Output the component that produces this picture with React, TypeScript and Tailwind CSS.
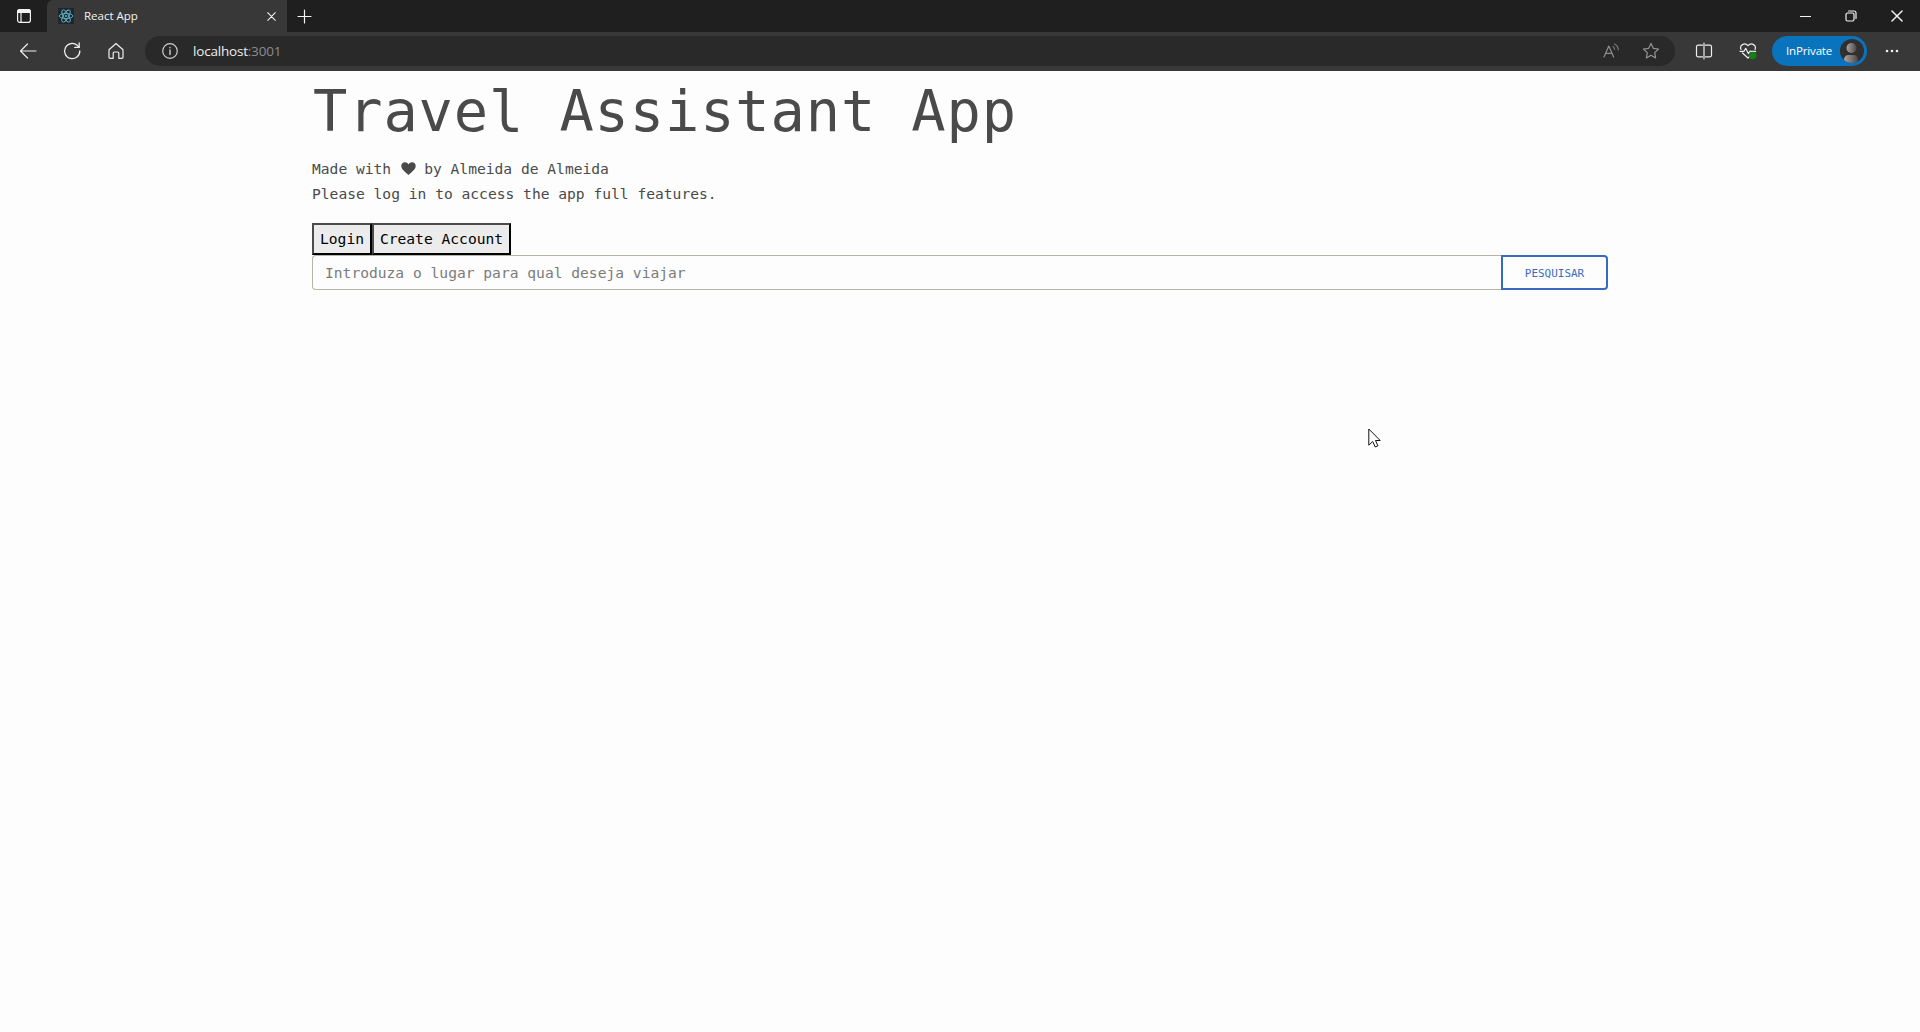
import React from "react";

const line = {
  fill: "none",
  stroke: "currentColor",
  strokeWidth: 1.2,
  strokeLinecap: "round" as const,
  strokeLinejoin: "round" as const,
};

function TabActionsIcon() {
  return (
    <svg width="16" height="16" viewBox="0 0 16 16" {...line}>
      <rect x="1.6" y="1.6" width="12.8" height="12.8" rx="2.2" />
      <path d="M1.6 4.500V3.8a2.2 2.2 0 0 1 2.2-2.2h8.4a2.2 2.2 0 0 1 2.2 2.2v.7z" fill="currentColor" />
      <path d="M5 5v9" />
    </svg>
  );
}

function ReactLogo() {
  return (
    <svg width="16" height="16" viewBox="0 0 16 16" fill="none" stroke="#58b4c8" strokeWidth="0.9">
      <rect width="16" height="16" fill="#22252c" stroke="none" />
      <ellipse cx="8" cy="8" rx="6.8" ry="2.6" />
      <ellipse cx="8" cy="8" rx="6.8" ry="2.6" transform="rotate(60 8 8)" />
      <ellipse cx="8" cy="8" rx="6.8" ry="2.6" transform="rotate(120 8 8)" />
      <circle cx="8" cy="8" r="1.1" fill="#58b4c8" stroke="none" />
    </svg>
  );
}

function Cross({ size }: { size: number }) {
  return (
    <svg width={size} height={size} viewBox="0 0 10 10" {...line}>
      <path d="M.8.8l8.4 8.4M9.2.8L.8 9.2" />
    </svg>
  );
}

function TabStrip() {
  return (
    <div className="flex h-8 bg-[#1f1f1f] text-[#f4f4f4]">
      <div className="flex w-[47px] items-center justify-center pl-px">
        <TabActionsIcon />
      </div>
      <div className="flex w-60 items-center rounded-tl-md bg-[#383838] pr-[11px] pl-[11px]">
        <ReactLogo />
        <span className="ml-[10px] text-[11.5px] leading-4">React App</span>
        <span className="ml-auto">
          <Cross size={9} />
        </span>
      </div>
      <div className="flex items-center pl-[10px]">
        <svg width="15" height="15" viewBox="0 0 15 15" {...line}>
          <path d="M7.5 1v13M1 7.5h13" />
        </svg>
      </div>
      <div className="ml-auto flex items-center pr-[17px]">
        <svg width="11" height="11" viewBox="0 0 11 11" {...line}>
          <path d="M.5 5.5h10" />
        </svg>
        <svg className="ml-[34px]" width="12" height="12" viewBox="0 0 12 12" {...line}>
          <rect x="1" y="3" width="8" height="8" rx="1.5" />
          <path d="M3.5 1H9a2 2 0 0 1 2 2v5.5" />
        </svg>
        <span className="ml-[34px]">
          <Cross size={12} />
        </span>
      </div>
    </div>
  );
}

function Toolbar() {
  return (
    <div className="flex h-[39px] items-center bg-[#383838] pb-px text-[#eeeeee]">
      <svg className="ml-[19px]" width="18" height="18" viewBox="0 0 18 18" {...line}>
        <path d="M17 9H1.5M8.5 2L1.5 9l7 7" />
      </svg>
      <svg className="ml-[26px]" width="18" height="18" viewBox="0 0 18 18" {...line} strokeWidth={1.3}>
        <path d="M16.8 9A7.6 7.6 0 1 1 14.2 3.3L16 5.2" />
        <path d="M16.2 1v4.4h-4.4" />
      </svg>
      <svg className="ml-[26px]" width="18" height="18" viewBox="0 0 18 18" {...line}>
        <path d="M2 7.7L9 1.5l7 6.2v7.6a1 1 0 0 1-1 1h-3.2V11a1 1 0 0 0-1-1H7.2a1 1 0 0 0-1 1v5.3H3a1 1 0 0 1-1-1z" />
      </svg>
      <div className="ml-[20px] flex h-[30px] w-[1530px] items-center rounded-full bg-[#292929] pr-[15px] pl-[17px]">
        <svg width="16" height="16" viewBox="0 0 16 16" {...line} stroke="#cfcfcf">
          <circle cx="8" cy="8" r="7.3" />
          <path d="M8 7v4.5M8 4.4v.3" strokeWidth="1.4" />
        </svg>
        <span className="ml-[15px] text-[13.5px] leading-5 tracking-[-0.2px]">
          localhost<span className="text-[#8c8c8c]">:3001</span>
        </span>
        <svg className="ml-auto" width="17" height="16" viewBox="0 0 17 16" {...line} stroke="#8e8e8e">
          <path d="M1 14L5.8 3l4.8 11M2.6 10.3H9" />
          <path d="M10 3.5c1 .7 1.5 1.6 1.6 2.8M11.6 1c2.2 1.2 3.5 3 3.7 5.8" stroke="#777785" />
        </svg>
        <svg className="ml-[22px]" width="18" height="18" viewBox="0 0 18 18" {...line} stroke="#959595">
          <path d="M9 1.500l2.300 4.800 5.200.7-3.800 3.600.9 5.300L9 13.300l-4.600 2.600.9-5.300L1.500 7l5.200-.7z" />
        </svg>
      </div>
      <svg className="ml-[20px]" width="18" height="18" viewBox="0 0 18 18" {...line}>
        <path d="M7.500 3.200H3a1.500 1.500 0 0 0-1.500 1.500v8.600A1.500 1.500 0 0 0 3 14.800h4.500M10.500 3.200H15a1.500 1.500 0 0 1 1.500 1.500v8.600a1.500 1.500 0 0 1-1.500 1.500h-4.500M9 1v16" />
      </svg>
      <svg className="ml-[26px]" width="18" height="18" viewBox="0 0 18 18" {...line}>
        <path d="M2 7.400C.2 3.500 5.500-.2 9 3.700 12.500-.2 17.800 3.500 16 7.400M3.500 11L9 16l3-2.700" />
        <path d="M1 9.300h4l1.700-3 2.600 5.300 1.800-2.600 1 .3h4.600" />
        <circle cx="13.700" cy="13.500" r="3.800" fill="#168016" stroke="none" />
      </svg>
      <div className="ml-[15px] flex h-[30px] w-[95px] items-center rounded-full bg-[#0a73bd] pr-[3px] pl-[14px]">
        <span className="text-[11.5px] leading-4 tracking-[-0.15px] text-white">InPrivate</span>
        <svg className="ml-auto" width="24" height="24" viewBox="0 0 24 24">
          <defs>
            <clipPath id="avatar">
              <circle cx="12" cy="12" r="12" />
            </clipPath>
            <linearGradient id="shade" x1="0" x2="1">
              <stop offset="0" stopColor="#aaa5a1" />
              <stop offset="1" stopColor="#4b4947" />
            </linearGradient>
          </defs>
          <g clipPath="url(#avatar)">
            <rect width="24" height="24" fill="#322f30" />
            <circle cx="11.500" cy="9" r="5" fill="url(#shade)" />
            <path d="M4 24v-3.500a4.500 4.500 0 0 1 4.500-4.500h5a4.500 4.500 0 0 1 4.500 4.500V24z" fill="url(#shade)" />
          </g>
        </svg>
      </div>
      <svg className="ml-[18px]" width="14" height="4" viewBox="0 0 14 4" fill="currentColor">
        <circle cx="2" cy="2" r="1.300" />
        <circle cx="7" cy="2" r="1.300" />
        <circle cx="12" cy="2" r="1.300" />
      </svg>
    </div>
  );
}

function Heart() {
  return (
    <svg className="mt-[6px] mr-[8px] ml-[10px]" width="15" height="13" viewBox="0 0 15 13" fill="#4a4a4a">
      <path d="M7.500 13C5.500 10.500.3 7.800.3 3.900.3 1.700 1.900.2 3.900.2c1.600 0 2.900.8 3.600 2.300C8.200 1 9.500.2 11.100.2c2 0 3.600 1.500 3.600 3.700 0 3.900-5.200 6.600-7.200 9.100z" />
    </svg>
  );
}

function Pointer() {
  return (
    <svg className="absolute top-[428px] left-[1368px]" width="13" height="20" viewBox="0 0 13 20">
      <path d="M.8 1v16.200l3.900-3.700 2.500 5.500 2.700-1.200-2.400-5.300h4.700z" fill="#fff" stroke="#111" strokeWidth="1" />
    </svg>
  );
}

export default function App() {
  return (
    <div className="relative h-[1032px] w-[1920px] overflow-hidden bg-[#fdfdfd] font-['Open_Sans','Noto_Sans',sans-serif]">
      <TabStrip />
      <Toolbar />
      <main className="ml-[312px] w-[1296px] font-['DejaVu_Sans_Mono',monospace] text-[14.62px] text-[#4a4a4a]">
        <h1 className="h-[78px] pl-px text-[57px] leading-[80px] tracking-[0.88px] whitespace-pre">Travel Assistant App</h1>
        <div className="mt-[7px] flex h-[25px] leading-[25px]">
          <span>Made with</span>
          <Heart />
          <span>by Almeida de Almeida</span>
        </div>
        <p className="h-[25px] leading-[25px]">Please log in to access the app full features.</p>
        <div className="mt-[17px] flex h-8 text-black">
          <button className="w-[60px] border-2 border-t-[#4c4c4c] border-r-black border-b-black border-l-[#4c4c4c] bg-[#ececec]">
            Login
          </button>
          <button className="w-[139px] border-2 border-t-[#4c4c4c] border-r-black border-b-black border-l-[#4c4c4c] bg-[#ececec]">
            Create Account
          </button>
        </div>
        <div className="flex h-[35px]">
          <input
            className="min-w-0 flex-1 rounded-l border border-r-0 border-[#b5b5a5] px-[12px] placeholder:text-[#7b7b7b]"
            placeholder="Introduza o lugar para qual deseja viajar"
          />
          <button className="w-[107px] rounded-r border-2 border-[#386bc0] pt-[3px] text-[10.96px] text-[#386bc0]">
            PESQUISAR
          </button>
        </div>
      </main>
      <Pointer />
    </div>
  );
}
